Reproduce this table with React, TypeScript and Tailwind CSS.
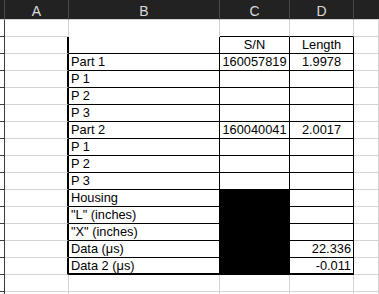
import React from "react";

const FONT = { fontFamily: '"Liberation Sans", Arial, sans-serif' };

// cell border presets
const rowHead = "bg-[#222222] border-r border-b border-r-[#3c3c3c] border-b-[#3c3c3c]";
const grid = "border-r border-b border-r-[#d4d4d4] border-b-[#d4d4d4]";
const aEdge = "border-r-2 border-b border-r-black border-b-[#d4d4d4]";
const tbl = "border-r border-b border-black";
const tblLast = "border-r border-b-2 border-black";

type Align = "l" | "c" | "r";

function Cell({
  cls,
  text,
  align = "l",
  fill = false,
}: {
  cls: string;
  text?: string;
  align?: Align;
  fill?: boolean;
}) {
  const alignCls =
    align === "c" ? "justify-center" : align === "r" ? "justify-end pr-[2px]" : "justify-start pl-[2px]";
  return (
    <div
      className={`h-[17px] flex items-start overflow-visible whitespace-nowrap leading-[16px] text-[12.8px] text-black ${alignCls} ${cls} ${
        fill ? "bg-black" : "bg-white"
      }`}
    >
      {text}
    </div>
  );
}

const labels = [
  "",
  "Part 1",
  "P 1",
  "P 2",
  "P 3",
  "Part 2",
  "P 1",
  "P 2",
  "P 3",
  "Housing",
  "\"L\" (inches)",
  "\"X\" (inches)",
  "Data (μs)",
  "Data 2 (μs)",
];

const serials = ["S/N", "160057819", "", "", "", "160040041", "", "", "", "", "", "", "", ""];

const lengths: { t: string; a: Align }[] = [
  { t: "Length", a: "c" },
  { t: "1.9978", a: "c" },
  { t: "", a: "c" },
  { t: "", a: "c" },
  { t: "", a: "c" },
  { t: "2.0017", a: "c" },
  { t: "", a: "c" },
  { t: "", a: "c" },
  { t: "", a: "c" },
  { t: "", a: "c" },
  { t: "", a: "c" },
  { t: "", a: "c" },
  { t: "22.336", a: "r" },
  { t: "-0.011", a: "r" },
];

function HeaderCell({ label, last = false }: { label?: string; last?: boolean }) {
  return (
    <div
      className={`h-[20px] bg-[#222222] border-b border-b-[#d4d4d4] ${
        last ? "" : "border-r border-r-[#474747]"
      } flex justify-center pt-[3px] leading-[16px] text-[14px] text-[#dadada]`}
    >
      {label}
    </div>
  );
}

export default function App() {
  return (
    <div className="w-[379px] h-[294px] overflow-hidden bg-white" style={FONT}>
      <div className="grid grid-cols-[5px_64px_151px_70px_64px_1fr]">
        {/* column header strip */}
        <HeaderCell />
        <HeaderCell label="A" />
        <HeaderCell label="B" />
        <HeaderCell label="C" />
        <HeaderCell label="D" />
        <HeaderCell last />

        {/* row 1 */}
        <Cell cls={rowHead} />
        <Cell cls={grid} />
        <Cell cls="border-r border-r-[#d4d4d4]" />
        <Cell cls="border-r border-b border-r-[#d4d4d4] border-b-black" />
        <Cell cls="border-r border-b border-r-[#d4d4d4] border-b-black" />
        <Cell cls={grid} />

        {/* bordered block, rows 2-15 */}
        {labels.map((label, i) => {
          const last = i === labels.length - 1;
          const edge = last ? tblLast : tbl;
          return (
            <React.Fragment key={i}>
              <Cell cls={rowHead} />
              <Cell cls={aEdge} />
              <Cell cls={edge} text={label} />
              <Cell cls={edge} text={serials[i]} align="c" fill={i >= 9} />
              <Cell cls={edge} text={lengths[i].t} align={lengths[i].a} />
              <Cell cls={grid} />
            </React.Fragment>
          );
        })}

        {/* rows 16-17 */}
        {[0, 1].map((r) => (
          <React.Fragment key={`e${r}`}>
            <Cell cls={rowHead} />
            <Cell cls={grid} />
            <Cell cls={grid} />
            <Cell cls={grid} />
            <Cell cls={grid} />
            <Cell cls={grid} />
          </React.Fragment>
        ))}
      </div>
    </div>
  );
}
